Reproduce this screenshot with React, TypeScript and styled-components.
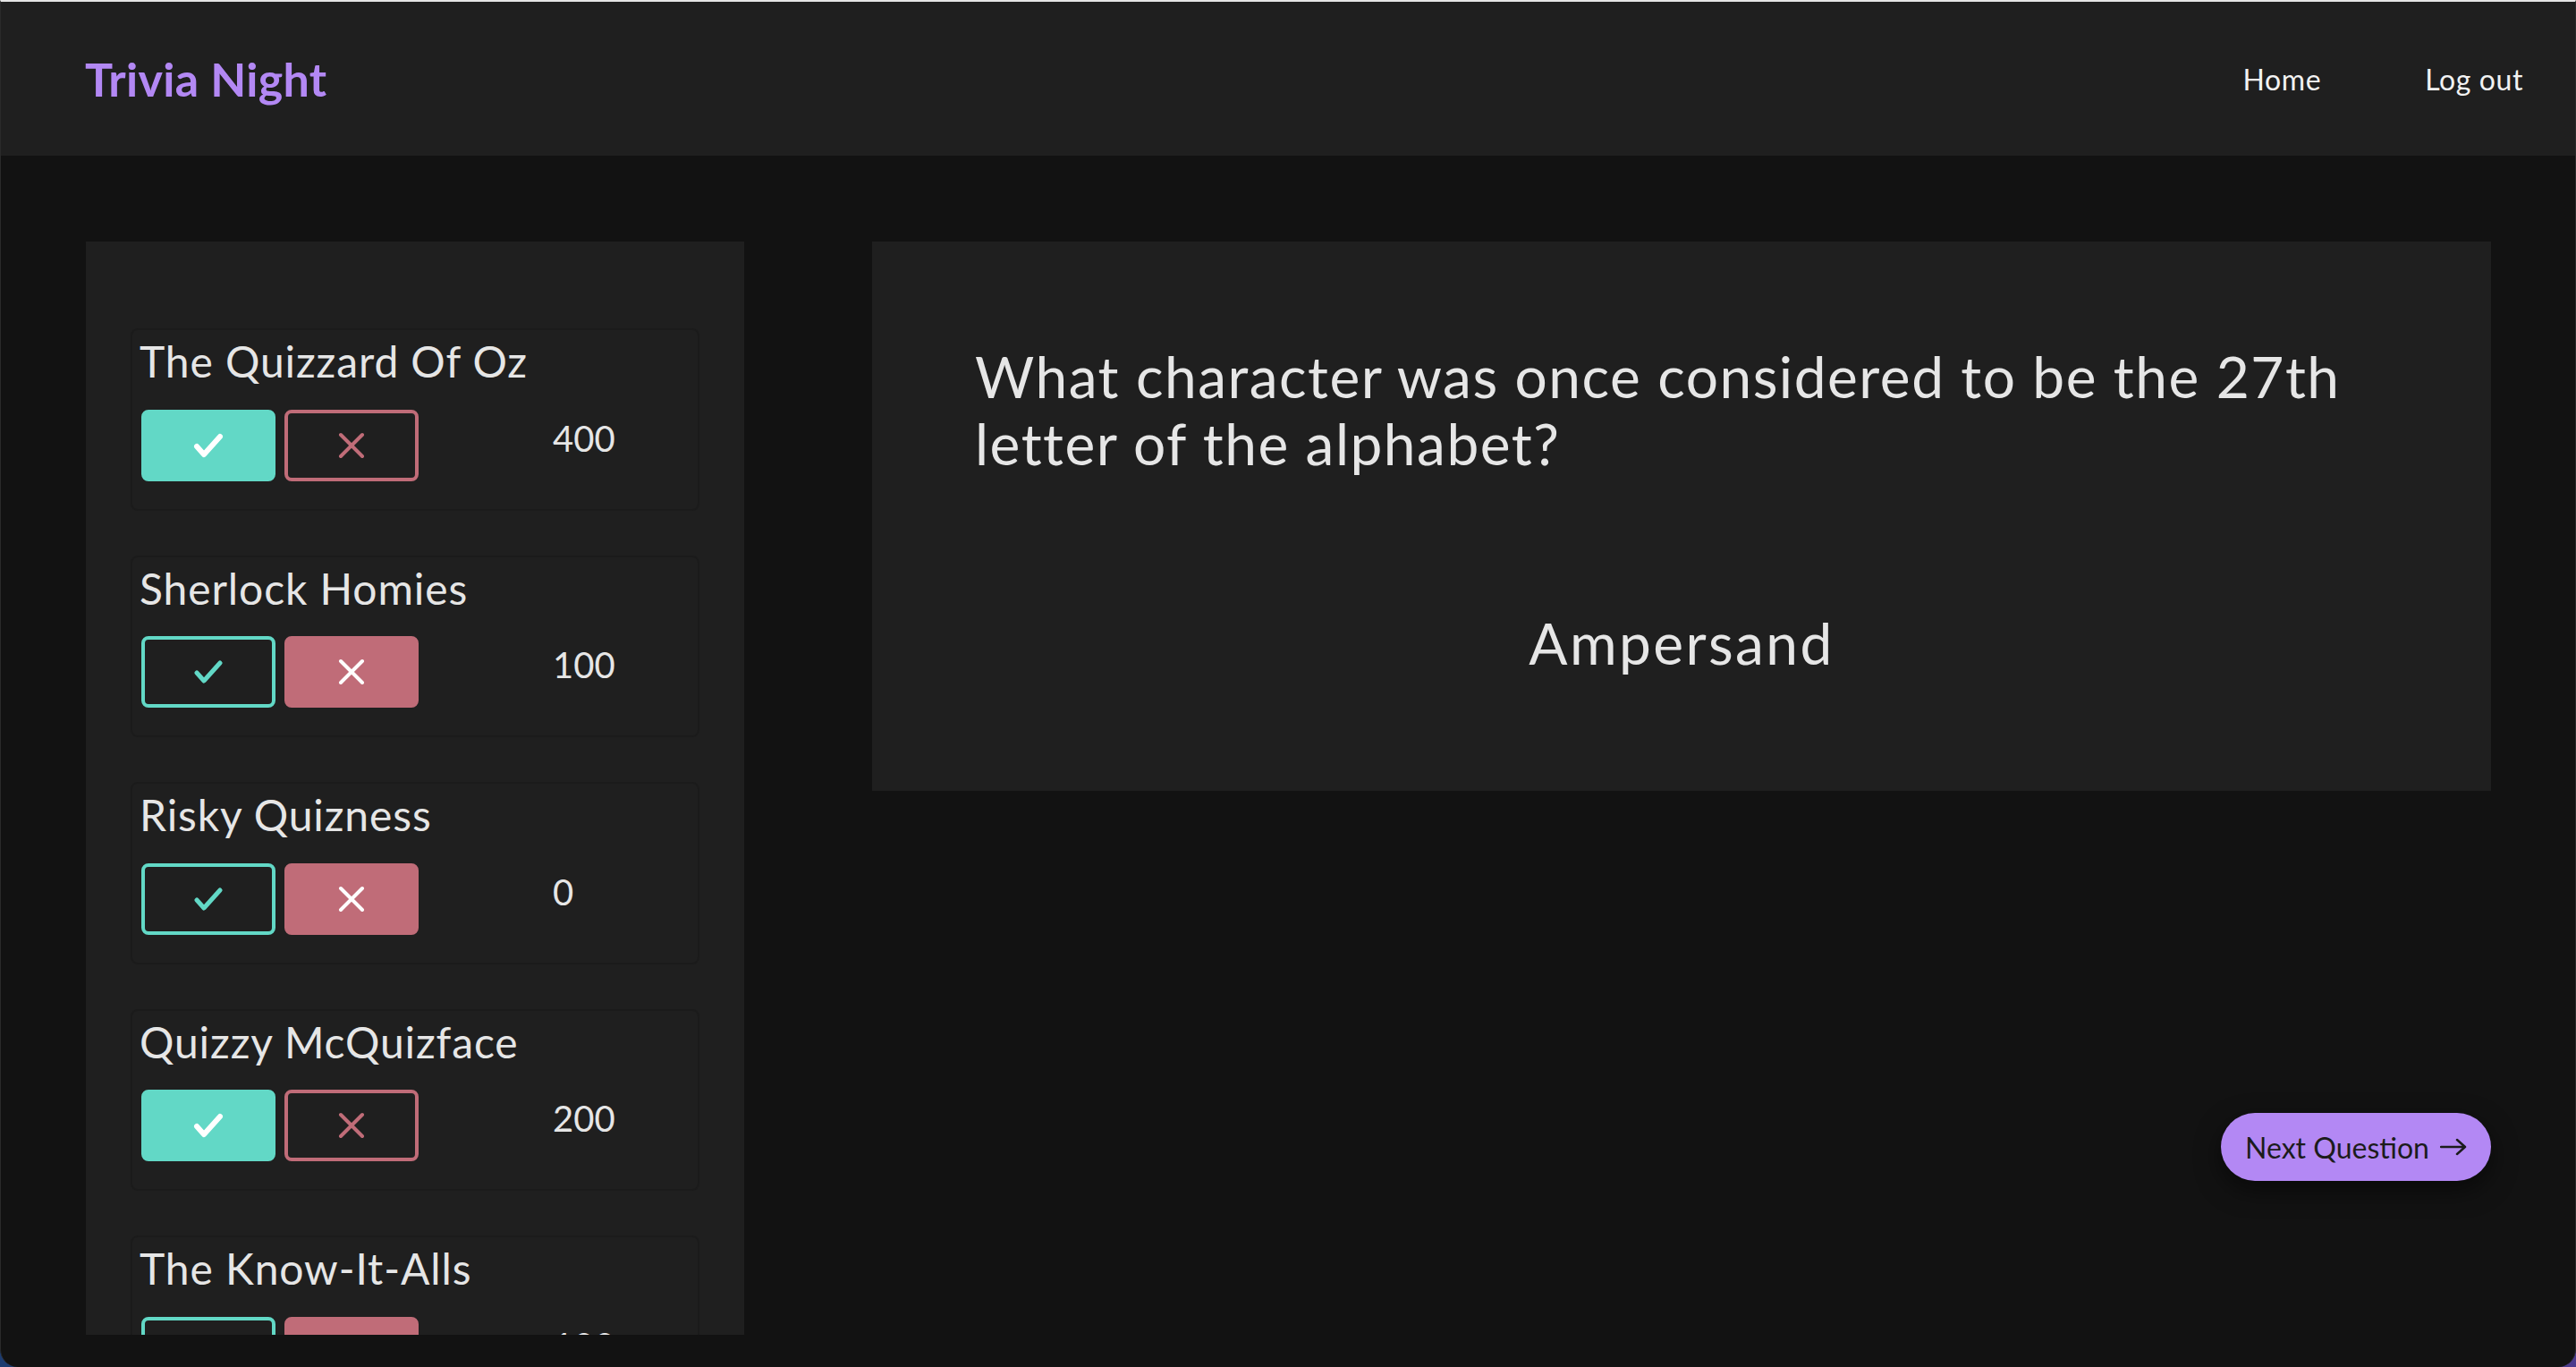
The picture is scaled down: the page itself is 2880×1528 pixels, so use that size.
import React from "react";
import styled, { createGlobalStyle } from "styled-components";

const GlobalStyle = createGlobalStyle`
	* {
		box-sizing: border-box;
	}
	html,
	body {
		margin: 0;
		padding: 0;
		height: 100%;
	}
	body {
		background: linear-gradient(90deg, #1d3c70 0%, #3b3a86 50%, #4b3b8c 100%);
		font-family: Lato, "Noto Sans", "Liberation Sans", sans-serif;
		color: #e6e6e6;
	}
`;

const Screen = styled.div`
	height: 100vh;
	display: flex;
	flex-direction: column;
	background-color: #121212;
	border-top: 2px solid #e4e4e4;
	border-left: 1px solid #2a2a2a;
	border-right: 1px solid #2a2a2a;
	border-radius: 0 0 20px 20px;
	overflow: hidden;
`;

const Header = styled.header`
	flex: 0 0 172px;
	display: flex;
	align-items: center;
	justify-content: space-between;
	padding-left: 94px;
	background-color: #1f1f1f;
`;

const Logo = styled.h1`
	margin: 0;
	font-size: 52px;
	font-weight: 700;
	color: #b388f4;
	letter-spacing: 0.3px;
`;

const Nav = styled.nav`
	display: flex;
	align-items: center;
`;

const NavLink = styled.a`
	padding: 0 58px;
	font-size: 32px;
	letter-spacing: 0.6px;
	color: #f2f2f2;
	text-decoration: none;
`;

const Main = styled.main`
	flex: 1;
	min-height: 0;
	display: grid;
	grid-template-columns: 736px 1fr;
	column-gap: 143px;
	padding: 96px 94px 36px 95px;
`;

const Sidebar = styled.aside`
	background-color: #1f1f1f;
	padding: 97px 50px 0;
	overflow: hidden;
	display: flex;
	flex-direction: column;
	gap: 50px;
`;

const TeamCard = styled.div`
	flex: 0 0 auto;
	border: 2px solid #1b1b1b;
	border-radius: 8px;
	padding: 6px 8px 31px;
`;

const TeamName = styled.h3`
	margin: 0 0 25px;
	font-size: 48px;
	font-weight: 400;
	line-height: 1.2;
	letter-spacing: 0.9px;
	color: #e6e6e6;
`;

const ScoreRow = styled.div`
	display: flex;
	align-items: flex-start;
	gap: 10px;
	padding-left: 2px;
`;

const MarkButton = styled.button<{ $color: string; $active: boolean }>`
	width: 150px;
	height: 80px;
	display: flex;
	align-items: center;
	justify-content: center;
	border-radius: 8px;
	border: 4px solid ${(props) => props.$color};
	background-color: ${(props) => (props.$active ? props.$color : "transparent")};
	color: ${(props) => (props.$active ? "#ffffff" : props.$color)};
	padding: 0;
	cursor: pointer;
`;

const Score = styled.span`
	margin-left: 140px;
	margin-top: 8px;
	font-size: 40px;
	line-height: 1.2;
	color: #e6e6e6;
`;

const Stage = styled.section`
	display: flex;
	flex-direction: column;
`;

const QuestionCard = styled.div`
	background-color: #1f1f1f;
	padding: 113px 115px 128px;
`;

const Question = styled.p`
	margin: 0;
	font-size: 64px;
	line-height: 75px;
	letter-spacing: 1.5px;
	color: #e6e6e6;
`;

const Answer = styled.p`
	margin: 148px 0 0;
	font-size: 64px;
	line-height: 75px;
	letter-spacing: 2.4px;
	text-align: center;
	color: #e6e6e6;
`;

const NextButton = styled.button`
	align-self: flex-end;
	margin-top: 360px;
	width: 302px;
	height: 76px;
	display: flex;
	align-items: center;
	justify-content: center;
	gap: 12px;
	border: none;
	border-radius: 38px;
	background-color: #b388f4;
	color: #1c1c1c;
	font-family: Lato, "Noto Sans", sans-serif;
	font-size: 32px;
	box-shadow: 0 10px 28px rgba(0, 0, 0, 0.5);
	cursor: pointer;
`;

const CheckIcon = ({ bold }: { bold: boolean }) => (
	<svg width="34" height="28" viewBox="0 0 34 28" fill="none">
		<polyline
			points="4,15 12,24 30,4"
			stroke="currentColor"
			strokeWidth={bold ? 6 : 5}
			strokeLinecap="round"
			strokeLinejoin="round"
		/>
	</svg>
);

const CrossIcon = () => (
	<svg width="30" height="30" viewBox="0 0 30 30" fill="none">
		<path
			d="M3 3 L27 27 M27 3 L3 27"
			stroke="currentColor"
			strokeWidth="4"
			strokeLinecap="round"
		/>
	</svg>
);

const ArrowIcon = () => (
	<svg width="30" height="20" viewBox="0 0 30 20" fill="none">
		<path
			d="M1 10 H28 M19 2 L28 10 L19 18"
			stroke="currentColor"
			strokeWidth="2.5"
			strokeLinecap="round"
			strokeLinejoin="round"
		/>
	</svg>
);

const teams = [
	{ name: "The Quizzard Of Oz", correct: true, score: 400 },
	{ name: "Sherlock Homies", correct: false, score: 100 },
	{ name: "Risky Quizness", correct: false, score: 0 },
	{ name: "Quizzy McQuizface", correct: true, score: 200 },
	{ name: "The Know-It-Alls", correct: false, score: 100 },
];

const TEAL = "#62d8c6";
const PINK = "#c06c78";

export default function App() {
	return (
		<>
			<GlobalStyle />
			<Screen>
				<Header>
					<Logo>Trivia Night</Logo>
					<Nav>
						<NavLink href="#">Home</NavLink>
						<NavLink href="#">Log out</NavLink>
					</Nav>
				</Header>
				<Main>
					<Sidebar>
						{teams.map((team) => (
							<TeamCard key={team.name}>
								<TeamName>{team.name}</TeamName>
								<ScoreRow>
									<MarkButton $color={TEAL} $active={team.correct}>
										<CheckIcon bold={team.correct} />
									</MarkButton>
									<MarkButton $color={PINK} $active={!team.correct}>
										<CrossIcon />
									</MarkButton>
									<Score>{team.score}</Score>
								</ScoreRow>
							</TeamCard>
						))}
					</Sidebar>
					<Stage>
						<QuestionCard>
							<Question>
								What character was once considered to be the 27th letter of the
								alphabet?
							</Question>
							<Answer>Ampersand</Answer>
						</QuestionCard>
						<NextButton>
							Next Question
							<ArrowIcon />
						</NextButton>
					</Stage>
				</Main>
			</Screen>
		</>
	);
}
